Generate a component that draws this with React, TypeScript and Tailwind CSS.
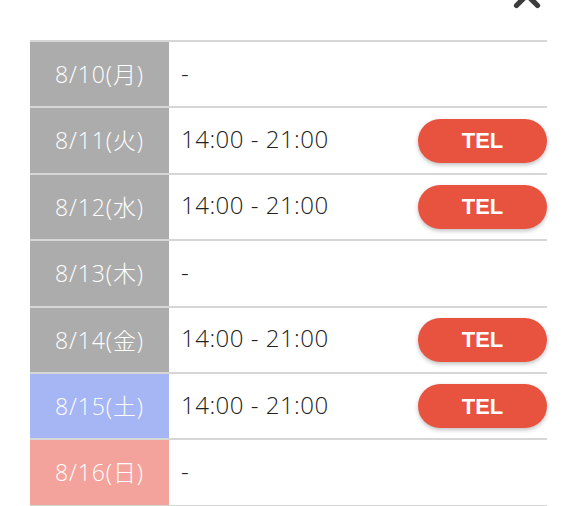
import { X } from "lucide-react";

type Row = { date: string; time: string | null; tone: "gray" | "blue" | "pink" };

const rows: Row[] = [
  { date: "8/10(月)", time: null, tone: "gray" },
  { date: "8/11(火)", time: "14:00 - 21:00", tone: "gray" },
  { date: "8/12(水)", time: "14:00 - 21:00", tone: "gray" },
  { date: "8/13(木)", time: null, tone: "gray" },
  { date: "8/14(金)", time: "14:00 - 21:00", tone: "gray" },
  { date: "8/15(土)", time: "14:00 - 21:00", tone: "blue" },
  { date: "8/16(日)", time: null, tone: "pink" },
];

const toneClass = {
  gray: "bg-[#acacac]",
  blue: "bg-[#a6b5f3]",
  pink: "bg-[#f3a39c]",
};

export default function App() {
  return (
    <div
      className="w-[576px] h-[506px] bg-white overflow-hidden"
      style={{ fontFamily: '"Open Sans", "Noto Sans CJK JP", sans-serif' }}
    >
      <div className="h-[40px] flex justify-end pr-[28px]">
        <X className="-mt-[26px] text-[#3c3c3c]" size={42} strokeWidth={3} />
      </div>
      <div className="ml-[30px] w-[517px] border-t-2 border-[#d6d6d6]">
        {rows.map((row) => (
          <div key={row.date} className="flex h-[66.4px] border-b-2 border-[#d6d6d6]">
            <div
              className={`w-[139px] shrink-0 flex items-center justify-center text-white text-[23px] font-light tracking-[0.9px] ${toneClass[row.tone]}`}
            >
              {row.date}
            </div>
            <div className="flex-1 flex items-center justify-between pl-[12px]">
              <span className="text-[24px] font-light tracking-[0.5px] text-[#222] -mt-[3px]">{row.time ?? "-"}</span>
              {row.time && (
                <button
                  className="w-[129px] h-[44px] rounded-full bg-[#e8533f] text-white text-[22px] font-bold shadow-[0_2px_4px_rgba(0,0,0,0.25)]"
                  style={{ fontFamily: '"Liberation Sans", sans-serif' }}
                >
                  TEL
                </button>
              )}
            </div>
          </div>
        ))}
      </div>
    </div>
  );
}
